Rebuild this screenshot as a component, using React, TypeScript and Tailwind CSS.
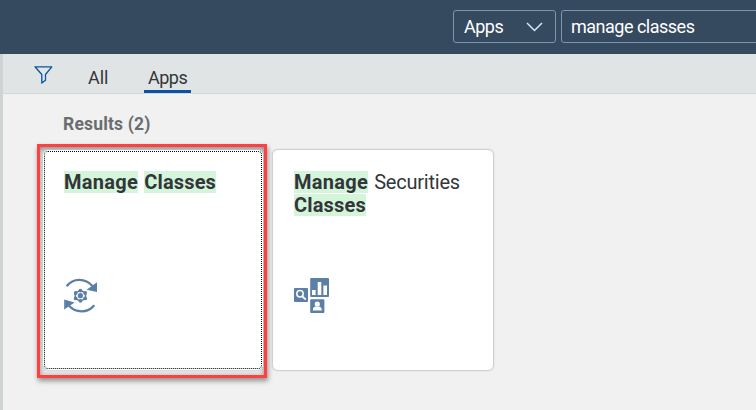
import React from "react";

function Mark({ children }: { children: React.ReactNode }) {
  return <span className="inline-block h-[22px] bg-[#d5f5db] align-top font-bold leading-[22px]">{children}</span>;
}

function CycleIcon() {
  return (
    <svg className="block" width="34" height="36" viewBox="0 0 34 36" fill="none">
      <path d="M2.7 8.3C9.5-.6 21.5.2 28.5 8" stroke="#5b7fa6" strokeWidth="2.3" />
      <path d="M33 4.2v9.9l-10.4-2.3z" fill="#5b7fa6" />
      <path d="M30.3 27.2c-6.8 8.4-18.8 7.8-25.3.6" stroke="#5b7fa6" strokeWidth="2.3" />
      <path d="M.2 31.4v-9.9l10.4 3z" fill="#5b7fa6" />
      <g fill="#5b7fa6">
        <circle cx="16.4" cy="17.7" r="2.6" />
        <circle cx="16.4" cy="12.6" r="1.9" />
        <circle cx="16.4" cy="22.8" r="1.9" />
        <circle cx="11.7" cy="15" r="1.9" />
        <circle cx="21.1" cy="15" r="1.9" />
        <circle cx="11.7" cy="20.4" r="1.9" />
        <circle cx="21.1" cy="20.4" r="1.9" />
      </g>
      <path d="M16.4 12.3l5.1 2.7v5.4l-5.1 2.7-5.1-2.7V15z" stroke="#5b7fa6" strokeWidth="1.5" />
    </svg>
  );
}

function SecuritiesIcon() {
  return (
    <svg className="block" width="36" height="36" viewBox="0 0 36 36" fill="none">
      <rect x="16.2" y="0" width="18.8" height="19" rx="1" fill="#5b7fa6" />
      <path d="M18 12h3.6v5H18zM23.7 4h3.6v13h-3.6zM29.4 7.5H33V17h-3.6z" fill="#fff" />
      <rect x="0" y="10" width="14" height="14" rx="1" fill="#5b7fa6" />
      <circle cx="6" cy="15.8" r="3.2" stroke="#fff" strokeWidth="1.5" />
      <path d="M8.2 18.2l3.6 3.4" stroke="#fff" strokeWidth="1.9" />
      <rect x="16.2" y="21.3" width="14.2" height="13.8" rx="1" fill="#5b7fa6" />
      <circle cx="23.3" cy="26" r="2.6" fill="#fff" />
      <path d="M18.8 32.6c0-3 1.4-4 3-4h3c1.6 0 3 1 3 4z" fill="#fff" />
    </svg>
  );
}

export default function App() {
  return (
    <div className="flex h-[410px] w-[756px] flex-col overflow-hidden bg-[#f1f1f1] font-[Roboto,'Liberation_Sans',sans-serif] text-[#32363a]">
      <header className="flex h-[54px] shrink-0 gap-[5px] bg-[#354a5f] pl-[453px] pt-[10px] text-[18px] text-white">
        <div className="flex h-[33px] w-[103px] shrink-0 items-center justify-between rounded-[3px] border border-[#7996b4] pl-[10px] pr-[12px]">
          <span className="leading-[31px] tracking-[-0.5px]">Apps</span>
          <svg width="17" height="10" viewBox="0 0 17 10" fill="none">
            <path d="M1 1l7.5 7.5L16 1" stroke="#d1e8ff" strokeWidth="1.5" />
          </svg>
        </div>
        <div className="h-[33px] w-[230px] shrink-0 whitespace-nowrap rounded-[3px] border border-[#7996b4] pl-[9px] leading-[31px] tracking-[-0.5px]">
          manage classes
        </div>
      </header>
      <div className="flex flex-1">
        <div className="w-[3px] shrink-0 bg-[#cfd3d4]" />
        <main className="flex-1">
          <nav className="flex h-[40px] border-b border-[#d5d8d9] bg-[#e0e4e5] text-[18px]">
            <svg className="ml-[31px] mt-[12px] shrink-0" width="19" height="18" viewBox="0 0 19 18" fill="none">
              <path d="M1 .8h16.8l-6.3 7.7v5.8l-3.7 2.8V8.5z" stroke="#0854a0" strokeWidth="1.3" strokeLinejoin="round" />
            </svg>
            <span className="ml-[35px] w-[56px] pt-[10px] leading-[28px]">All</span>
            <span className="h-[39px] w-[47px] border-b-[3px] border-[#0854a0] pl-[4px] pt-[10px] leading-[28px] tracking-[-0.5px]">Apps</span>
          </nav>
          <h2 className="ml-[60px] mt-[19px] h-[31px] text-[17.5px] font-bold leading-[22px] tracking-[0.17px] text-[#6a6d70]">Results (2)</h2>
          <div className="ml-[34px] flex items-start gap-[5px]">
            <div className="h-[234px] w-[230px] border-[3px] border-[#ff4040] bg-[#e4e4e4] p-[3px] pr-[1px] shadow-[1px_3px_5px_rgba(0,0,0,0.4),inset_0_2px_5px_rgba(0,0,0,0.4)]">
              <article className="h-[220px] w-[220px] rounded-[5px] bg-white p-px shadow-[0_0_1px_#999]">
                <div className="h-[218px] rounded-[4px] border border-dotted border-black pl-[19px] pt-[19px]">
                  <h3 className="flex h-[107px] gap-[6px] whitespace-nowrap text-[20px] leading-[23px]">
                    <span className="tracking-[0.3px]"><Mark>Manage</Mark></span>
                    <span className="tracking-[0.17px]"><Mark>Classes</Mark></span>
                  </h3>
                  <CycleIcon />
                </div>
              </article>
            </div>
            <article className="mt-[5px] h-[222px] w-[222px] rounded-[6px] border border-[#d0d0d0] bg-white pl-[21px] pt-[21px] shadow-[0_0_2px_rgba(0,0,0,0.12)]">
              <h3 className="h-[107px] whitespace-nowrap text-[20px] leading-[23px]">
                <span className="flex gap-[6px]">
                  <span className="tracking-[0.3px]"><Mark>Manage</Mark></span>
                  <span className="tracking-[-0.22px]">Securities</span>
                </span>
                <span className="block tracking-[0.17px]"><Mark>Classes</Mark></span>
              </h3>
              <SecuritiesIcon />
            </article>
          </div>
        </main>
      </div>
    </div>
  );
}
